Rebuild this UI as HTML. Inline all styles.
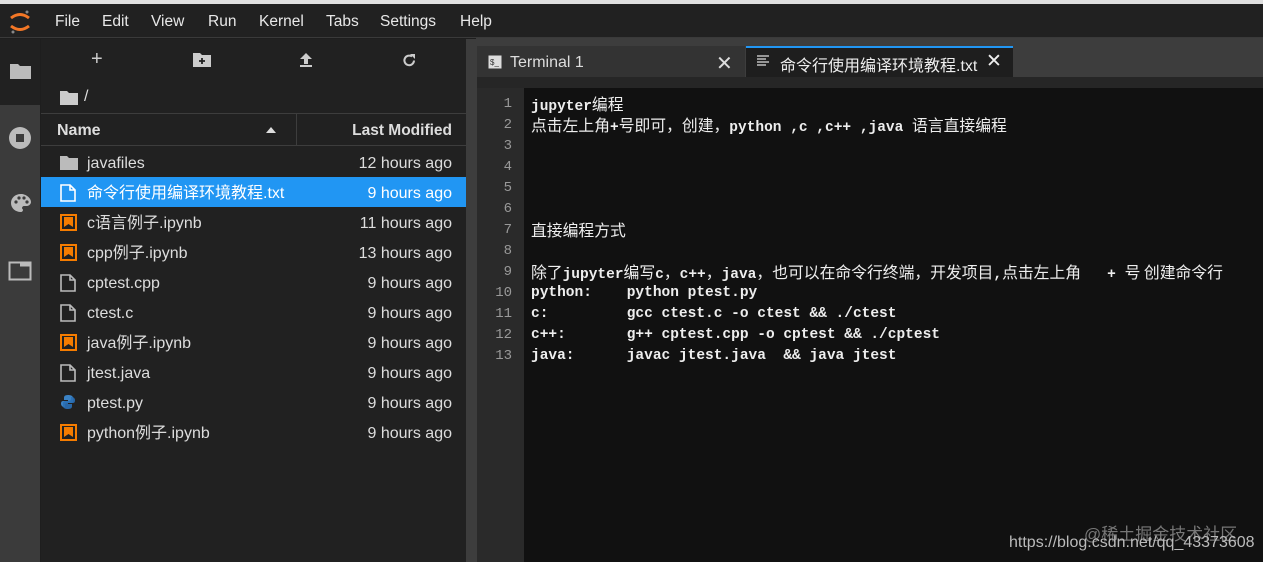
<!DOCTYPE html>
<html><head><meta charset="utf-8"><style>
*{margin:0;padding:0;box-sizing:border-box}
body{width:1263px;height:562px;overflow:hidden;background:#1e1e1e;font-family:"Liberation Sans","Noto Sans CJK SC",sans-serif;color:#ddd;position:relative}
.abs{position:absolute}
#top{left:0;top:0;width:1263px;height:4px;background:#e0e0e0}
#menu{left:0;top:4px;width:1263px;height:34px;background:#212121;border-bottom:1px solid #3a3a3a}
#menu span{position:absolute;top:9px;font-size:15.5px;color:#e8e8e8}
#side{left:0;top:39px;width:40px;height:523px;background:#3b3b3b}
#sideact{left:0;top:39px;width:40px;height:66px;background:#212121}
#fp{left:41px;top:39px;width:425px;height:523px;background:#212121}
#div{left:466px;top:39px;width:10px;height:523px;background:#3d3d3d}
.row{position:absolute;left:41px;width:425px;height:30px;font-size:16px}
.row .n{position:absolute;left:46px;top:7px;line-height:20px;height:20px;color:#ddd}
.row .t{position:absolute;right:14px;top:7px;line-height:20px;color:#ddd}
.row svg{position:absolute;left:19px;top:7px}
#ed{left:476px;top:38px;width:787px;height:524px;background:#3d3d3d}
#code{left:477px;top:88px;width:786px;height:474px;background:#111}
#gut{left:477px;top:88px;width:47px;height:474px;background:#2a2a2a}
.ln{position:absolute;left:477px;width:35px;text-align:right;font-family:"Liberation Mono",monospace;font-size:14px;color:#999;line-height:20px}
.cl{position:absolute;left:531px;font-family:"Liberation Mono","Noto Sans CJK SC",monospace;font-size:14.5px;color:#eee;white-space:pre;font-weight:bold;line-height:20px}
.cl b{font-weight:normal;font-size:15.8px;font-family:"Noto Sans CJK SC",sans-serif}
</style></head><body>
<div id="top" class="abs"></div>
<div id="menu" class="abs">
<svg class="abs" style="left:8px;top:5px" width="24" height="26" viewBox="0 0 24 26"><path d="M3 9 Q12 2 21 9" stroke="#f37726" stroke-width="3" fill="none"/><path d="M3 17 Q12 24 21 17" stroke="#f37726" stroke-width="3" fill="none"/><circle cx="19" cy="3" r="1.5" fill="#888"/><circle cx="5" cy="23" r="1.5" fill="#888"/></svg>
<span style="left:55px">File</span><span style="left:102px">Edit</span><span style="left:151px">View</span><span style="left:208px">Run</span><span style="left:259px">Kernel</span><span style="left:326px">Tabs</span><span style="left:380px">Settings</span><span style="left:460px">Help</span>
</div>
<div id="side" class="abs"></div>
<div id="sideact" class="abs"></div>
<svg class="abs" style="left:9px;top:62px" width="23" height="18"><path d="M1 2h8l2 2h11v13H1z" fill="#bbb"/></svg>
<svg class="abs" style="left:8px;top:126px" width="24" height="24"><circle cx="12" cy="12" r="11" fill="#bbb"/><rect x="8" y="8" width="8" height="8" fill="#3b3b3b"/></svg>
<svg class="abs" style="left:10px;top:193px" width="22" height="20"><path d="M11 1C5 1 1 5 1 10s4 9 10 9c1 0 2-1 2-2s-1-1-1-2 1-2 2-2h3c2 0 4-2 4-4 0-4-5-8-10-8z" fill="#bbb"/><circle cx="6" cy="9" r="1.6" fill="#3b3b3b"/><circle cx="9" cy="5" r="1.6" fill="#3b3b3b"/><circle cx="14" cy="5" r="1.6" fill="#3b3b3b"/><circle cx="17" cy="9" r="1.6" fill="#3b3b3b"/></svg>
<svg class="abs" style="left:8px;top:261px" width="24" height="20"><rect x="1.5" y="1.5" width="21" height="17" fill="none" stroke="#bbb" stroke-width="2"/><rect x="12" y="1.5" width="10" height="4" fill="#bbb"/></svg>
<div id="fp" class="abs"></div>
<div class="abs" style="left:91px;top:48px;font-size:20px;color:#ccc">+</div>
<svg class="abs" style="left:193px;top:52px" width="18" height="15"><path d="M0 1h7l2 2h9v12H0z" fill="#ccc"/><path d="M9 6v6M6 9h6" stroke="#212121" stroke-width="1.8"/></svg>
<svg class="abs" style="left:299px;top:52px" width="14" height="16"><path d="M7 1L1 7h4v5h4V7h4z" fill="#ccc"/><rect x="1" y="13" width="12" height="2" fill="#ccc"/></svg>
<svg class="abs" style="left:402px;top:53px" width="15" height="15"><path d="M12 7.5A4.8 4.8 0 1 1 10 3.5" stroke="#ccc" stroke-width="2" fill="none"/><path d="M8 1h5v5z" fill="#ccc"/></svg>
<svg class="abs" style="left:60px;top:90px" width="18" height="15"><path d="M0 1h7l2 2h9v12H0z" fill="#ccc"/></svg>
<div class="abs" style="left:84px;top:88px;font-size:16px;color:#ddd">/</div>
<div class="abs" style="left:41px;top:113px;width:425px;height:1px;background:#3d3d3d"></div>
<div class="abs" style="left:41px;top:145px;width:425px;height:1px;background:#3d3d3d"></div>
<div class="abs" style="left:296px;top:114px;width:1px;height:31px;background:#3d3d3d"></div>
<div class="abs" style="left:57px;top:122px;font-size:16px;font-weight:bold;color:#ddd">Name</div>
<svg class="abs" style="left:266px;top:127px" width="10" height="6"><path d="M0 6L5 0L10 6z" fill="#ddd"/></svg>
<div class="abs" style="right:811px;top:122px;font-size:15.5px;font-weight:bold;color:#ddd">Last Modified</div>

<div class="row" style="top:147px"><svg width="18" height="16"><path d="M0 2h7l2 2h9v12H0z" fill="#bbb"/></svg><span class="n">javafiles</span><span class="t">12 hours ago</span></div>
<div class="row" style="top:177px;background:#2196f3"><svg width="16" height="18"><path d="M1 1h9l5 5v11H1z M10 1v5h5" fill="none" stroke="#fff" stroke-width="1.6"/></svg><span class="n" style="color:#fff">命令行使用编译环境教程.txt</span><span class="t" style="color:#fff">9 hours ago</span></div>
<div class="row" style="top:207px"><svg width="17" height="17"><rect x="1" y="1" width="15" height="15" fill="none" stroke="#f57c00" stroke-width="2"/><path d="M4 3h9v10l-4.5-3L4 13z" fill="#f57c00"/></svg><span class="n">c语言例子.ipynb</span><span class="t">11 hours ago</span></div>
<div class="row" style="top:237px"><svg width="17" height="17"><rect x="1" y="1" width="15" height="15" fill="none" stroke="#f57c00" stroke-width="2"/><path d="M4 3h9v10l-4.5-3L4 13z" fill="#f57c00"/></svg><span class="n">cpp例子.ipynb</span><span class="t">13 hours ago</span></div>
<div class="row" style="top:267px"><svg width="16" height="18"><path d="M1 1h9l5 5v11H1z M10 1v5h5" fill="none" stroke="#bbb" stroke-width="1.6"/></svg><span class="n">cptest.cpp</span><span class="t">9 hours ago</span></div>
<div class="row" style="top:297px"><svg width="16" height="18"><path d="M1 1h9l5 5v11H1z M10 1v5h5" fill="none" stroke="#bbb" stroke-width="1.6"/></svg><span class="n">ctest.c</span><span class="t">9 hours ago</span></div>
<div class="row" style="top:327px"><svg width="17" height="17"><rect x="1" y="1" width="15" height="15" fill="none" stroke="#f57c00" stroke-width="2"/><path d="M4 3h9v10l-4.5-3L4 13z" fill="#f57c00"/></svg><span class="n">java例子.ipynb</span><span class="t">9 hours ago</span></div>
<div class="row" style="top:357px"><svg width="16" height="18"><path d="M1 1h9l5 5v11H1z M10 1v5h5" fill="none" stroke="#bbb" stroke-width="1.6"/></svg><span class="n">jtest.java</span><span class="t">9 hours ago</span></div>
<div class="row" style="top:387px"><svg width="16" height="16"><path d="M8 1C4 1 4 3 4 4v2h4v1H3C1 7 1 9 1 10s1 3 3 3h1v-2c0-1 1-2 2-2h4c1 0 2-1 2-2V4c0-2-2-3-5-3z" fill="#3b82c4"/><path d="M8 15c4 0 4-2 4-3v-2H8V9h5c2 0 2-2 2-3s-1-3-3-3h-1v2c0 1-1 2-2 2H5c-1 0-2 1-2 2v3c0 2 2 3 5 3z" fill="#2a6fb5" opacity=".9"/></svg><span class="n">ptest.py</span><span class="t">9 hours ago</span></div>
<div class="row" style="top:417px"><svg width="17" height="17"><rect x="1" y="1" width="15" height="15" fill="none" stroke="#f57c00" stroke-width="2"/><path d="M4 3h9v10l-4.5-3L4 13z" fill="#f57c00"/></svg><span class="n">python例子.ipynb</span><span class="t">9 hours ago</span></div>

<div id="div" class="abs"></div>
<div id="ed" class="abs"></div>
<div class="abs" style="left:477px;top:46px;width:268px;height:31px;background:#333"></div>
<div class="abs" style="left:746px;top:46px;width:267px;height:32px;background:#1e1e1e;border-top:2px solid #2196f3"></div>
<div class="abs" style="left:477px;top:77px;width:786px;height:11px;background:#262626"></div>
<svg class="abs" style="left:488px;top:55px" width="14" height="14"><rect x=".5" y=".5" width="13" height="13" fill="#ddd"/><text x="2" y="10" font-size="8" fill="#333" font-family="Liberation Sans">$_</text></svg>
<div class="abs" style="left:510px;top:54px;font-size:16px;color:#ddd">Terminal 1</div>
<div class="abs" style="left:716px;top:51px;font-size:20px;color:#ddd">✕</div>
<svg class="abs" style="left:757px;top:55px" width="12" height="12"><path d="M0 1h12M0 4h9M0 7h12M0 10h9" stroke="#ddd" stroke-width="1.3"/></svg>
<div class="abs" style="left:780px;top:52px;font-size:16px;color:#eee;width:198px;overflow:hidden;white-space:nowrap">命令行使用编译环境教程.txt</div>
<div class="abs" style="left:986px;top:50px;font-size:19px;color:#eee">✕</div>
<div id="code" class="abs"></div>
<div id="gut" class="abs"></div>
<div class="ln" style="top:94px">1</div><div class="ln" style="top:115px">2</div><div class="ln" style="top:136px">3</div><div class="ln" style="top:157px">4</div><div class="ln" style="top:178px">5</div><div class="ln" style="top:199px">6</div><div class="ln" style="top:220px">7</div><div class="ln" style="top:241px">8</div><div class="ln" style="top:262px">9</div><div class="ln" style="top:283px">10</div><div class="ln" style="top:304px">11</div><div class="ln" style="top:325px">12</div><div class="ln" style="top:346px">13</div>
<div class="cl" style="top:94px">jupyter<b>编程</b></div>
<div class="cl" style="top:115px"><b>点击左上角</b>+<b>号即可，创建，</b>python ,c ,c++ ,java <b>语言直接编程</b></div>
<div class="cl" style="top:220px"><b>直接编程方式</b></div>
<div class="cl" style="top:262px"><b>除了</b>jupyter<b>编写</b>c<b>，</b>c++<b>，</b>java<b>，也可以在命令行终端，开发项目</b>,<b>点击左上角</b>   + <b>号 创建命令行</b></div>
<div class="cl" style="top:283px">python:    python ptest.py</div>
<div class="cl" style="top:304px">c:         gcc ctest.c -o ctest &amp;&amp; ./ctest</div>
<div class="cl" style="top:325px">c++:       g++ cptest.cpp -o cptest &amp;&amp; ./cptest</div>
<div class="cl" style="top:346px">java:      javac jtest.java  &amp;&amp; java jtest</div>
<div class="abs" style="left:1084px;top:520px;font-size:17px;color:#777">@稀土掘金技术社区</div>
<div class="abs" style="left:1009px;top:534px;font-size:16px;color:#bbb">https://blog.csdn.net/qq_43373608</div>
</body></html>
